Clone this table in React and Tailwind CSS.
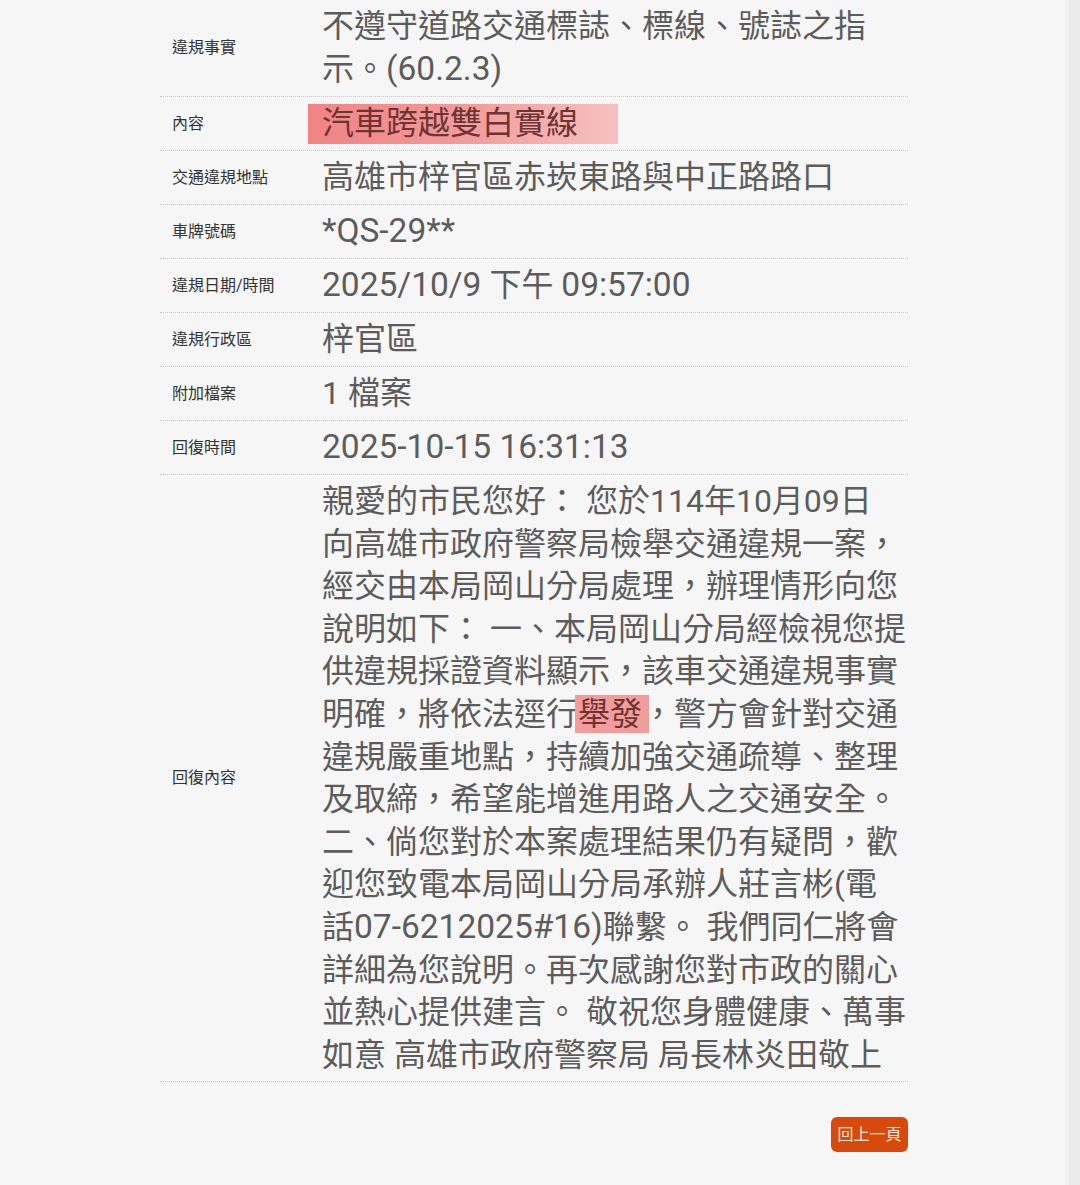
import React from 'react'

const font = { fontFamily: 'Roboto, "Noto Sans CJK TC", sans-serif' }

// latin runs render a touch larger than the CJK text in the source
const L = ({ children }) => <span className="text-[33.5px] leading-none">{children}</span>

const rows = [
  { label: '交通違規地點', value: '高雄市梓官區赤崁東路與中正路路口' },
  { label: '車牌號碼', value: <L>*QS-29**</L> },
  { label: '違規日期/時間', value: <><L>2025/10/9</L> 下午 <L>09:57:00</L></> },
  { label: '違規行政區', value: '梓官區' },
  { label: '附加檔案', value: '1 檔案' },
  { label: '回復時間', value: <L>2025-10-15 16:31:13</L> },
]

function Row({ label, children }) {
  return (
    <div className="flex border-b border-dotted border-[#c9c9c9]">
      <div className="w-[150px] shrink-0 pl-3 flex items-center text-[16px] text-[#333]">{label}</div>
      <div className="flex-1 pl-3 py-[5px] text-[32px] leading-[43px] text-[#5c5c5c]">{children}</div>
    </div>
  )
}

export default function App() {
  return (
    <div className="flex min-h-[1185px] bg-[#f6f6f6]" style={font}>
      <div className="flex-1">
        <div className="ml-[160px] w-[748px]">
          <Row label="違規事實">
            不遵守道路交通標誌、標線、號誌之指
            <br />
            示。<L>(60.2.3)</L>
          </Row>
          <Row label="內容">
            <span className="inline-block -ml-[14px] pl-[14px] pr-[40px] h-[40px] leading-[38px] bg-gradient-to-r from-[#f08484] via-[#f39a9a] to-[#f6c0c0] text-[#6e3434]">
              汽車跨越雙白實線
            </span>
          </Row>
          {rows.map((r) => (
            <Row key={r.label} label={r.label}>
              {r.value}
            </Row>
          ))}
          <div className="flex border-b border-dotted border-[#c9c9c9]">
            <div className="w-[150px] shrink-0 pl-3 flex items-center text-[16px] text-[#333]">回復內容</div>
            <div className="flex-1 pl-3 py-[5px] text-[32px] leading-[42.6px] text-[#5c5c5c] whitespace-nowrap">
              親愛的市民您好： 您於114年10月09日<br />
              向高雄市政府警察局檢舉交通違規一案，<br />
              經交由本局岡山分局處理，辦理情形向您<br />
              說明如下： 一、本局岡山分局經檢視您提<br />
              供違規採證資料顯示，該車交通違規事實<br />
              明確，將依法逕行<span className="bg-[#f39c9c] text-[#6e3434] pl-[3px] -ml-[3px] pr-[7px] -mr-[7px]">舉發</span>，警方會針對交通<br />
              違規嚴重地點，持續加強交通疏導、整理<br />
              及取締，希望能增進用路人之交通安全。<br />
              二、倘您對於本案處理結果仍有疑問，歡<br />
              迎您致電本局岡山分局承辦人莊言彬(電<br />
              話<L>07-6212025#16)</L>聯繫。 我們同仁將會<br />
              詳細為您說明。再次感謝您對市政的關心<br />
              並熱心提供建言。 敬祝您身體健康、萬事<br />
              如意 高雄市政府警察局 局長林炎田敬上
            </div>
          </div>
          <div className="flex justify-end mt-[35px]">
            <button className="bg-[#d8490c] text-[#fbe9dc] text-[16px] rounded-md h-[35px] w-[77px] flex items-center justify-center">
              回上一頁
            </button>
          </div>
        </div>
      </div>
      <div className="w-[3px] bg-[#f1f1f1]" />
      <div className="w-[11px] bg-[#ebebeb]" />
    </div>
  )
}
